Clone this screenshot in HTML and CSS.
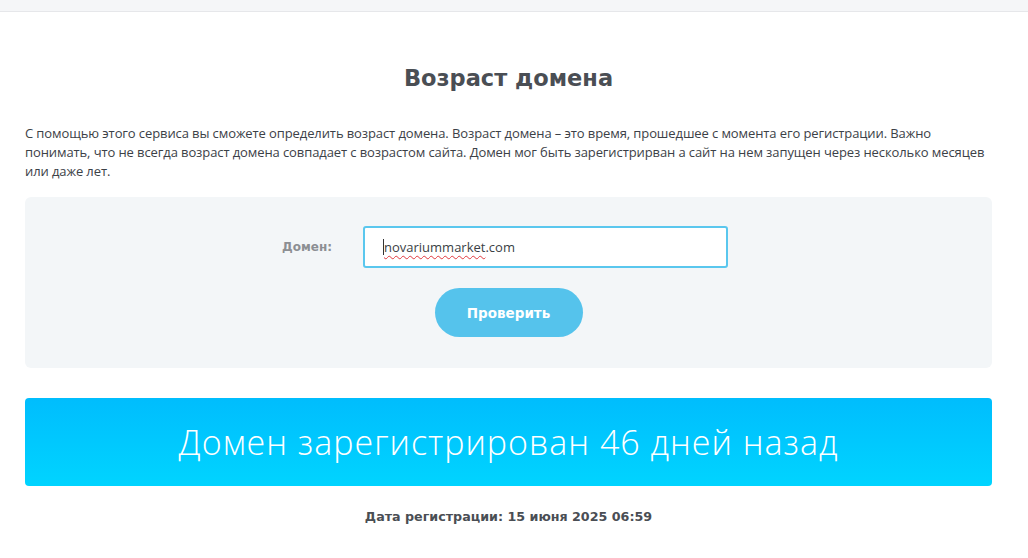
FILE: index.html
```html
<!DOCTYPE html>
<html lang="ru">
<head>
<meta charset="utf-8">
<title>Возраст домена</title>
<link rel="stylesheet" href="styles.css">
</head>
<body>
<div class="topbar"></div>
<main class="page">
  <h1 class="title">Возраст домена</h1>
  <p class="intro">С помощью этого сервиса вы сможете определить возраст домена. Возраст домена – это время, прошедшее с момента его регистрации. Важно понимать, что не всегда возраст домена совпадает с возрастом сайта. Домен мог быть зарегистрирван а сайт на нем запущен через несколько месяцев или даже лет.</p>
  <section class="form-box">
    <div class="form-row">
      <label class="label" for="domain">Домен:</label>
      <div class="input"><span class="caret"></span><span class="typed">novariummarket</span>.com</div>
    </div>
    <button class="check-btn">Проверить</button>
  </section>
  <div class="result">Домен зарегистрирован 46 дней назад</div>
  <div class="reg-date">Дата регистрации: 15 июня 2025 06:59</div>
</main>
</body>
</html>
```
FILE: styles.css
```css
html, body { margin: 0; padding: 0; background: #ffffff; }
body { font-family: "Open Sans", "DejaVu Sans", sans-serif; color: #3a3f45; }
.topbar { height: 11px; background: #f5f6f8; border-bottom: 1px solid #e6e7ea; }
.page { width: 967px; margin-left: 25px; }
.title {
  font-family: "DejaVu Sans", sans-serif; font-weight: bold; font-size: 22.5px;
  color: #4a4e54; text-align: center; margin: 0; padding-top: 52px; line-height: 28px;
}
.intro {
  font-family: "Open Sans", sans-serif; font-size: 13px; line-height: 19px;
  letter-spacing: -0.1px; color: #3c4147; margin: 32px 0 0 0;
}
.form-box {
  margin-top: 16px; background: #f3f6f8; border-radius: 6px; height: 171px;
  display: flex; flex-direction: column; align-items: center; box-sizing: border-box;
  padding-top: 29px;
}
.form-row { display: flex; align-items: center; margin-left: -7px; }
.label {
  font-family: "DejaVu Sans", sans-serif; font-weight: bold; font-size: 12px;
  color: #8c8f93; width: 81px;
}
.input {
  width: 361px; height: 38px; border: 2px solid #5ac7ee; border-radius: 3px;
  background: #fff; box-sizing: content-box; display: flex; align-items: center;
  font-family: "Open Sans", sans-serif; font-size: 13px; color: #3a3f45;
}
.caret { display: inline-block; width: 1px; height: 16px; background: #333; margin-left: 18px; }
.typed {
  text-decoration: underline wavy #e0393e; text-decoration-thickness: 1px; text-underline-offset: 3px;
}
.check-btn {
  margin-top: 20px; width: 148px; height: 49px; border: none; border-radius: 25px;
  background: #55c3ec; color: #fff; font-family: "DejaVu Sans", sans-serif;
  font-weight: bold; font-size: 13.5px;
}
.result {
  margin-top: 30px; height: 88px; border-radius: 4px;
  background: linear-gradient(180deg, #00bdfd 0%, #00d4ff 100%);
  color: #fff; display: flex; align-items: center; justify-content: center;
  font-family: "Open Sans", sans-serif; font-weight: 300; font-size: 34px; letter-spacing: 1px;
}
.reg-date {
  text-align: center; margin-top: 23px; font-family: "DejaVu Sans", sans-serif;
  font-weight: bold; font-size: 12.7px; color: #4a4e54;
}
```
